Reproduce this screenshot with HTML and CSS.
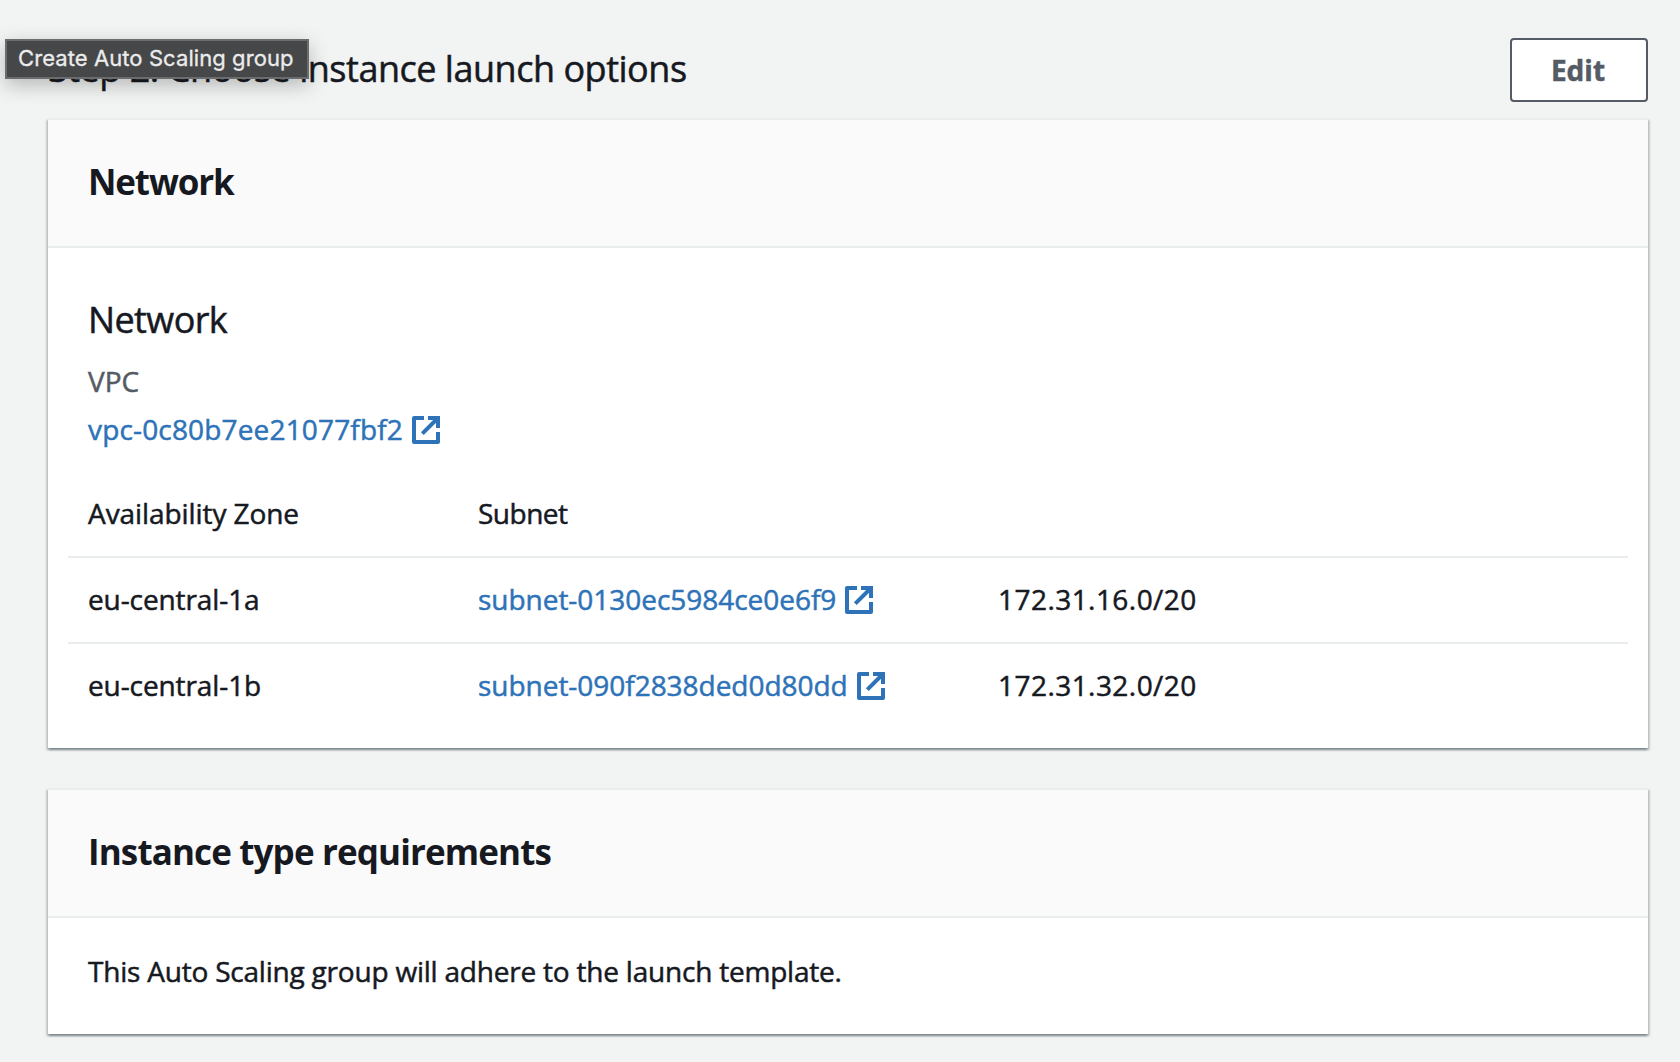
FILE: index.html
```html
<!DOCTYPE html>
<html lang="en">
<head>
<meta charset="utf-8">
<title>Create Auto Scaling group</title>
<link rel="stylesheet" href="styles.css">
</head>
<body>
<svg class="defs" aria-hidden="true">
  <symbol id="external" viewBox="0 0 28 28">
    <path d="M12 2H2V26H26V16M16 2H26V12M26 2L10.3 17.7" fill="none" stroke="currentColor" stroke-width="4" stroke-linejoin="round"/>
    <path d="M22 0H28V6Z" fill="currentColor"/>
  </symbol>
</svg>
<main class="page">
  <header class="step">
    <h1 class="step-title">Step 2: Choose instance launch options</h1>
    <button class="edit" type="button">Edit</button>
  </header>
  <section class="card">
    <div class="card-head"><h2 class="card-title card-title-network">Network</h2></div>
    <div class="card-body">
      <h3 class="subtitle">Network</h3>
      <div class="label">VPC</div>
      <a class="link vpc"><span>vpc-0c80b7ee21077fbf2</span><svg class="icon"><use href="#external"/></svg></a>
      <div class="table">
        <div class="row row-head"><span class="zone-head">Availability Zone</span><span class="subnet-head">Subnet</span></div>
        <div class="row">
          <span class="zone">eu-central-1a</span>
          <a class="link subnet"><span>subnet-0130ec5984ce0e6f9</span><svg class="icon"><use href="#external"/></svg></a>
          <span class="cidr">172.31.16.0/20</span>
        </div>
        <div class="row">
          <span class="zone">eu-central-1b</span>
          <a class="link subnet"><span>subnet-090f2838ded0d80dd</span><svg class="icon"><use href="#external"/></svg></a>
          <span class="cidr">172.31.32.0/20</span>
        </div>
      </div>
    </div>
  </section>
  <section class="card">
    <div class="card-head"><h2 class="card-title">Instance type requirements</h2></div>
    <div class="card-note">This Auto Scaling group will adhere to the launch template.</div>
  </section>
</main>
<div class="tooltip" role="tooltip">Create Auto Scaling group</div>
</body>
</html>
```
FILE: styles.css
```css
* { box-sizing: border-box; }
body {
  margin: 0;
  background: #f2f3f3;
  color: #16191f;
  font: 400 28px/44px "Open Sans", "Noto Sans", sans-serif;
  -webkit-text-stroke: 0.5px currentColor;
}
h1, h2, h3 { margin: 0; font-size: 36px; line-height: 44px; font-weight: 400; }
.defs { display: block; width: 0; height: 0; position: absolute; }
.page { padding: 38px 32px 0 48px; min-height: 1062px; }
.step { display: flex; align-items: center; justify-content: space-between; height: 64px; margin-bottom: 16px; }
.step-title { padding-bottom: 2px; letter-spacing: -0.48px; }
.edit {
  width: 138px;
  height: 64px;
  padding: 0 2px 0 0;
  border: 2px solid #545b64;
  border-radius: 4px;
  background: #fff;
  color: #545b64;
  font: 700 28px/40px "Open Sans", "Noto Sans", sans-serif;
}
.card {
  margin-bottom: 40px;
  border-top: 2px solid #eaeded;
  background: #fff;
  box-shadow: 0 2px 2px 0 rgba(0, 28, 36, 0.3), 2px 2px 2px 0 rgba(0, 28, 36, 0.15), -2px 2px 2px 0 rgba(0, 28, 36, 0.15);
}
.card-head { padding: 40px 40px 42px; border-bottom: 2px solid #eaeded; background: #fafafa; }
.card-title { font-size: 35px; font-weight: 700; letter-spacing: -0.87px; -webkit-text-stroke: 0; }
.card-title-network { letter-spacing: -1.15px; }
.card-body { padding: 50px 20px 41px; }
.subtitle { padding: 0 20px; margin-bottom: 17px; letter-spacing: -0.6px; }
.label { padding: 0 20px; margin-bottom: 4px; color: #545b64; }
.link { display: flex; align-items: center; gap: 9px; color: #2e73b8; }
.vpc { padding: 0 20px; letter-spacing: 0.16px; }
.icon { width: 28px; height: 28px; margin-top: 2px; flex: none; }
.table { margin-top: 40px; }
.row { display: grid; grid-template-columns: 390px 520px 1fr; padding: 19px 20px 21px; }
.row + .row { border-top: 2px solid #eaeded; }
.row:last-child { padding-bottom: 0; }
.row-head { padding-top: 0; }
.zone-head { letter-spacing: -0.08px; }
.subnet-head { letter-spacing: -0.5px; }
.zone { letter-spacing: -0.1px; }
.subnet { letter-spacing: -0.03px; }
.cidr { letter-spacing: 0.45px; }
.card-note { padding: 31px 40px 41px; letter-spacing: -0.21px; }
.tooltip {
  position: absolute;
  left: 5px;
  top: 39px;
  width: 304px;
  height: 40px;
  padding-left: 11px;
  border: 2px solid #6b6c6d;
  background: #464749;
  color: #ececec;
  font: 400 22px/34px Inter, sans-serif;
  letter-spacing: 0.08px;
  white-space: nowrap;
  box-shadow: 0 6px 20px rgba(0, 0, 0, 0.25);
  -webkit-text-stroke: 0.3px currentColor;
}
```
